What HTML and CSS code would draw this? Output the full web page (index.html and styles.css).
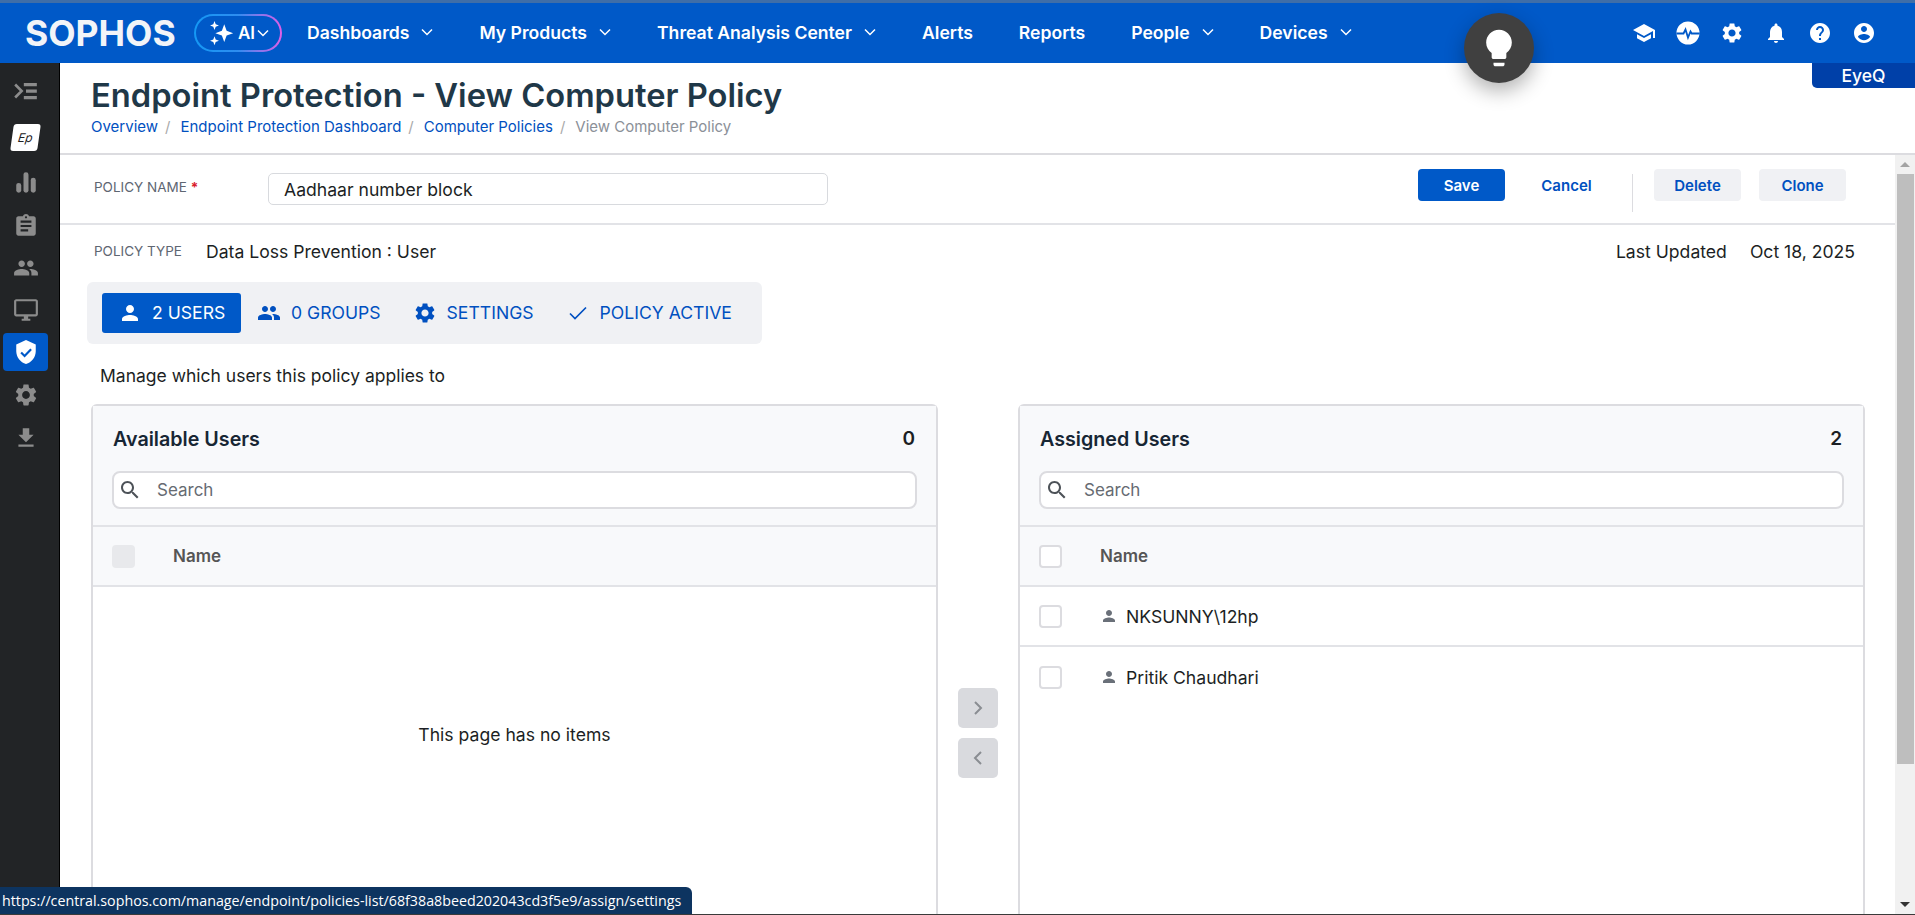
FILE: index.html
```html
<!DOCTYPE html>
<html>

<head>
    <meta charset="utf-8">
    <title>Endpoint Protection - View Computer Policy</title>
    <link rel="stylesheet" href="styles.css">
</head>

<body>
    <svg class="sprite" xmlns="http://www.w3.org/2000/svg">
        <defs>
            <symbol id="i-chevron" viewBox="0 0 12 8"><path d="M1 1.5l5 5 5-5" fill="none" stroke="currentColor" stroke-width="1.5"/></symbol>
            <symbol id="i-person" viewBox="0 0 24 24"><path d="M12 12c2.21 0 4-1.79 4-4s-1.79-4-4-4-4 1.79-4 4 1.79 4 4 4zm0 2c-2.67 0-8 1.34-8 4v2h16v-2c0-2.66-5.33-4-8-4z"/></symbol>
            <symbol id="i-group" viewBox="0 0 24 24"><path d="M16 11c1.66 0 2.99-1.34 2.99-3S17.66 5 16 5c-1.66 0-3 1.34-3 3s1.34 3 3 3zm-8 0c1.66 0 2.99-1.34 2.99-3S9.66 5 8 5C6.34 5 5 6.34 5 8s1.34 3 3 3zm0 2c-2.33 0-7 1.17-7 3.5V19h14v-2.5c0-2.33-4.67-3.5-7-3.5zm8 0c-.29 0-.62.02-.97.05 1.16.84 1.97 1.97 1.97 3.45V19h6v-2.5c0-2.33-4.67-3.5-7-3.5z"/></symbol>
            <symbol id="i-gear" viewBox="0 0 24 24"><path d="M19.14 12.94c.04-.3.06-.61.06-.94 0-.32-.02-.64-.07-.94l2.03-1.58c.18-.14.23-.41.12-.61l-1.92-3.32c-.12-.22-.37-.29-.59-.22l-2.39.96c-.5-.38-1.03-.7-1.62-.94l-.36-2.54c-.04-.24-.24-.41-.48-.41h-3.84c-.24 0-.43.17-.47.41l-.36 2.54c-.59.24-1.13.57-1.62.94l-2.39-.96c-.22-.08-.47 0-.59.22L2.74 8.87c-.12.21-.08.47.12.61l2.03 1.58c-.05.3-.09.63-.09.94s.02.64.07.94l-2.03 1.58c-.18.14-.23.41-.12.61l1.92 3.32c.12.22.37.29.59.22l2.39-.96c.5.38 1.03.7 1.62.94l.36 2.54c.05.24.24.41.48.41h3.84c.24 0 .44-.17.47-.41l.36-2.54c.59-.24 1.13-.56 1.62-.94l2.39.96c.22.08.47 0 .59-.22l1.92-3.32c.12-.22.07-.47-.12-.61l-2.01-1.58zM12 15.6c-1.98 0-3.6-1.62-3.6-3.6s1.62-3.6 3.6-3.6 3.6 1.62 3.6 3.6-1.62 3.6-3.6 3.6z"/></symbol>
            <symbol id="i-search" viewBox="0 0 24 24"><path d="M15.5 14h-.79l-.28-.27C15.41 12.59 16 11.11 16 9.5 16 5.91 13.09 3 9.5 3S3 5.91 3 9.5 5.91 16 9.5 16c1.61 0 3.09-.59 4.23-1.57l.27.28v.79l5 4.99L20.49 19l-4.99-5zm-6 0C7.01 14 5 11.99 5 9.5S7.01 5 9.5 5 14 7.01 14 9.5 11.99 14 9.5 14z"/></symbol>
        </defs>
    </svg>

    <div class="app">
        <!-- top bar -->
        <header class="topbar">
            <span class="logo">SOPHOS</span>
            <div class="ai-pill">
                <svg class="ai-stars" viewBox="0 0 24 24" fill="#fff"><path d="M15 4l2.200 6 6 2.200-6 2.200-2.200 6-2.200-6-6-2.200 6-2.200zM6 1l1.100 3 3 1.100-3 1.100L6 9.200 4.900 6.200l-3-1.100 3-1.100zM6 15l1.100 3 3 1.100-3 1.100L6 23.200l-1.100-3-3-1.100 3-1.100z"/></svg>
                <span>AI</span>
                <svg class="chev"><use href="#i-chevron"/></svg>
            </div>
            <nav class="mainnav">
                <a>Dashboards <svg class="chev"><use href="#i-chevron"/></svg></a>
                <a>My Products <svg class="chev"><use href="#i-chevron"/></svg></a>
                <a>Threat Analysis Center <svg class="chev"><use href="#i-chevron"/></svg></a>
                <a>Alerts</a>
                <a>Reports</a>
                <a>People <svg class="chev"><use href="#i-chevron"/></svg></a>
                <a>Devices <svg class="chev"><use href="#i-chevron"/></svg></a>
            </nav>
            <div class="topicons">
                <svg viewBox="0 0 24 24"><path d="M5 13.18v4L12 21l7-3.820v-4L12 17l-7-3.820zM12 3L1 9l11 6 9-4.910V17h2V9L12 3z"/></svg>
                <svg viewBox="0 0 24 24"><path fill-rule="evenodd" d="M12 .5a11.500 11.500 0 1 0 0 23 11.500 11.500 0 0 0 0-23z"/><path d="M.5 12.500h7l2-4 2.500 8 2.500-6 1.200 2h8" fill="none" stroke="#0059c8" stroke-width="1.800"/></svg>
                <svg viewBox="0 0 24 24"><use href="#i-gear"/></svg>
                <svg viewBox="0 0 24 24"><path d="M12 22c1.100 0 2-.9 2-2h-4c0 1.100.89 2 2 2zm6-6v-5c0-3.070-1.640-5.640-4.500-6.320V4c0-.83-.67-1.500-1.500-1.500s-1.500.67-1.500 1.500v.68C7.630 5.360 6 7.920 6 11v5l-2 2v1h16v-1l-2-2z"/></svg>
                <svg viewBox="0 0 24 24"><path d="M12 2C6.480 2 2 6.480 2 12s4.480 10 10 10 10-4.480 10-10S17.520 2 12 2zm1 17h-2v-2h2v2zm2.070-7.750l-.9.92C13.450 12.900 13 13.500 13 15h-2v-.5c0-1.100.45-2.100 1.170-2.830l1.240-1.260c.37-.36.59-.86.59-1.410 0-1.100-.9-2-2-2s-2 .9-2 2H8c0-2.210 1.790-4 4-4s4 1.790 4 4c0 .88-.36 1.680-.93 2.250z"/></svg>
                <svg viewBox="0 0 24 24"><path d="M12 2C6.480 2 2 6.480 2 12s4.480 10 10 10 10-4.480 10-10S17.520 2 12 2zm0 3c1.660 0 3 1.340 3 3s-1.340 3-3 3-3-1.340-3-3 1.340-3 3-3zm0 14.200c-2.500 0-4.710-1.280-6-3.220.03-1.990 4-3.080 6-3.080 1.990 0 5.970 1.090 6 3.080-1.290 1.940-3.500 3.220-6 3.220z"/></svg>
            </div>
        </header>

        <div class="body-row">
            <!-- left rail -->
            <aside class="rail">
                <svg class="rail-icon" viewBox="0 0 24 24"><path d="M10 4.500h12v3H10zM12 10.500h10v3H12zM10 16.500h12v3H10z"/><path d="M2 6l6 6-6 6" fill="none" stroke="currentColor" stroke-width="2.400"/></svg>
                <div class="product-badge"><span>Ep</span></div>
                <svg class="rail-icon chart" viewBox="0 0 24 24"><rect x="3" y="13" width="4.600" height="9" rx="2.300"/><rect x="9.700" y="3" width="4.600" height="19" rx="2.300"/><rect x="16.400" y="8" width="4.600" height="14" rx="2.300"/></svg>
                <svg class="rail-icon" viewBox="0 0 24 24"><path d="M19 3h-4.180C14.400 1.840 13.300 1 12 1c-1.300 0-2.400.84-2.820 2H5c-1.100 0-2 .9-2 2v14c0 1.100.9 2 2 2h14c1.100 0 2-.9 2-2V5c0-1.100-.9-2-2-2zm-7 0c.55 0 1 .45 1 1s-.45 1-1 1-1-.45-1-1 .45-1 1-1zm2 14H7v-2h7v2zm3-4H7v-2h10v2zm0-4H7V7h10v2z"/></svg>
                <svg class="rail-icon" viewBox="0 0 24 24"><use href="#i-group"/></svg>
                <svg class="rail-icon" viewBox="0 0 24 24"><path d="M21 2H3c-1.100 0-2 .9-2 2v12c0 1.100.9 2 2 2h7v2H8v2h8v-2h-2v-2h7c1.100 0 2-.9 2-2V4c0-1.100-.9-2-2-2zm0 14H3V4h18v12z"/></svg>
                <div class="rail-active">
                    <svg viewBox="0 0 24 24"><path fill="#fff" d="M12 1L3 5v6c0 5.550 3.840 10.740 9 12 5.160-1.260 9-6.450 9-12V5l-9-4z"/><path d="M7.500 12.500l3.200 3.200 6-6.200" fill="none" stroke="#0059c8" stroke-width="2"/></svg>
                </div>
                <svg class="rail-icon" viewBox="0 0 24 24"><use href="#i-gear"/></svg>
                <svg class="rail-icon" viewBox="0 0 24 24"><path d="M19 9h-4V3H9v6H5l7 7 7-7zM5 18v2h14v-2H5z"/></svg>
            </aside>

            <main class="main">
                <div class="page-head">
                    <h1>Endpoint Protection - View Computer Policy</h1>
                    <div class="crumbs">
                        <a>Overview</a><i>/</i>
                        <a>Endpoint Protection Dashboard</a><i>/</i>
                        <a>Computer Policies</a><i>/</i>
                        <span>View Computer Policy</span>
                    </div>
                </div>

                <div class="scroll-row">
                    <div class="content">
                        <!-- policy name -->
                        <div class="name-row">
                            <label class="field-label name-label">POLICY NAME <b>*</b></label>
                            <div class="name-input">Aadhaar number block</div>
                            <div class="actions">
                                <button class="btn primary">Save</button>
                                <button class="btn link">Cancel</button>
                                <span class="divider"></span>
                                <button class="btn soft">Delete</button>
                                <button class="btn soft">Clone</button>
                            </div>
                        </div>

                        <div class="type-row">
                            <label class="field-label type-label">POLICY TYPE</label>
                            <span>Data Loss Prevention : User</span>
                            <span class="updated">Last Updated</span>
                            <span class="updated-date">Oct 18, 2025</span>
                        </div>

                        <!-- tabs -->
                        <div class="tabs">
                            <a class="tab active"><svg viewBox="0 0 24 24"><use href="#i-person"/></svg>2 USERS</a>
                            <a class="tab"><svg viewBox="0 0 24 24"><use href="#i-group"/></svg>0 GROUPS</a>
                            <a class="tab"><svg viewBox="0 0 24 24"><use href="#i-gear"/></svg>SETTINGS</a>
                            <a class="tab"><svg viewBox="0 0 24 24"><path d="M4 12.500l5 5L20 6.500" fill="none" stroke="currentColor" stroke-width="1.700"/></svg>POLICY ACTIVE</a>
                        </div>

                        <p class="hint">Manage which users this policy applies to</p>

                        <div class="panels">
                            <section class="panel">
                                <div class="panel-head">
                                    <div class="panel-title"><h2>Available Users</h2><span>0</span></div>
                                    <div class="search"><svg viewBox="0 0 24 24"><use href="#i-search"/></svg>Search</div>
                                </div>
                                <div class="row head-row"><span class="check filled"></span><span class="col-name">Name</span></div>
                                <div class="empty">This page has no items</div>
                            </section>

                            <div class="transfer">
                                <button><svg viewBox="0 0 24 24"><path d="M9 6l6 6-6 6" fill="none" stroke="currentColor" stroke-width="2"/></svg></button>
                                <button><svg viewBox="0 0 24 24"><path d="M15 6l-6 6 6 6" fill="none" stroke="currentColor" stroke-width="2"/></svg></button>
                            </div>

                            <section class="panel">
                                <div class="panel-head">
                                    <div class="panel-title"><h2>Assigned Users</h2><span>2</span></div>
                                    <div class="search"><svg viewBox="0 0 24 24"><use href="#i-search"/></svg>Search</div>
                                </div>
                                <div class="row head-row"><span class="check"></span><span class="col-name">Name</span></div>
                                <div class="row"><span class="check"></span><svg class="user-icon" viewBox="0 0 24 24"><use href="#i-person"/></svg><span>NKSUNNY\12hp</span></div>
                                <div class="row last"><span class="check"></span><svg class="user-icon" viewBox="0 0 24 24"><use href="#i-person"/></svg><span>Pritik Chaudhari</span></div>
                            </section>
                        </div>
                    </div>

                    <div class="scrollbar">
                        <span class="arrow up"></span>
                        <span class="thumb"></span>
                        <span class="arrow down"></span>
                    </div>
                </div>
            </main>
        </div>

        <!-- overlays -->
        <div class="bulb">
            <svg viewBox="0 0 24 24"><path d="M9 21c0 .55.45 1 1 1h4c.55 0 1-.45 1-1v-1H9v1zm3-19C8.140 2 5 5.140 5 9c0 2.380 1.190 4.470 3 5.740V17c0 .55.45 1 1 1h6c.55 0 1-.45 1-1v-2.260c1.810-1.270 3-3.360 3-5.740 0-3.860-3.140-7-7-7z"/></svg>
        </div>
        <div class="eyeq">EyeQ</div>
        <div class="status-url">https://central.sophos.com/manage/endpoint/policies-list/68f38a8beed202043cd3f5e9/assign/settings</div>
    </div>
</body>

</html>
```

FILE: styles.css
```css
* {
    box-sizing: border-box;
}

body {
    margin: 0;
    background-color: #fff;
    color: #1c1f24;
    font-family: Inter, "Liberation Sans", sans-serif;
    font-size: 17.6px;
}

.sprite {
    display: none;
}

.app {
    position: relative;
    display: flex;
    flex-direction: column;
    height: 915px;
    overflow: hidden;
    border-bottom: 1px solid #3a3a3a;
}

/*top bar*/

.topbar {
    display: flex;
    align-items: center;
    flex: none;
    height: 63px;
    padding-left: 25px;
    background-color: #0059c8;
    border-top: 3px solid #3f6ea8;
    color: #fff;
}

.logo {
    width: 151px;
    font-size: 35.5px;
    font-weight: 700;
    color: #f2f4f8;
}

.ai-pill {
    display: flex;
    align-items: center;
    width: 88px;
    height: 38px;
    margin-left: 18px;
    padding-left: 12px;
    border: 2px solid transparent;
    border-radius: 19px;
    background: linear-gradient(#0059c8, #0059c8) padding-box, linear-gradient(90deg, #1499f5, #2e8df0 50%, #e25fe6) border-box;
    font-size: 17px;
    font-weight: 600;
}

.ai-stars {
    width: 26px;
    height: 26px;
    margin-right: 4px;
    fill: #fff;
}

.chev {
    width: 12px;
    height: 8px;
    margin-left: 2px;
    color: #fff;
}

.mainnav {
    display: flex;
    align-items: center;
    gap: 46px;
    margin-left: 25px;
    padding-bottom: 2px;
}

.mainnav a {
    display: flex;
    align-items: center;
    font-size: 17.6px;
    font-weight: 600;
    white-space: nowrap;
}

.mainnav .chev {
    margin-left: 12px;
}

.topicons {
    display: flex;
    gap: 20px;
    margin-left: auto;
    margin-right: 39px;
}

.topicons svg {
    width: 24px;
    height: 24px;
    fill: #fff;
}

.body-row {
    display: flex;
    flex: 1;
    min-height: 0;
}

/*left rail*/

.rail {
    display: flex;
    flex-direction: column;
    align-items: center;
    flex: none;
    width: 60px;
    padding-right: 8px;
    background-color: #222426;
    border-right: 1px solid #000;
    color: #8c8c8c;
}

.rail-icon {
    flex: none;
    width: 26px;
    height: 26px;
    margin-top: 16px;
    fill: currentColor;
}

.rail-icon:first-child {
    margin-top: 15px;
}

.rail-icon:last-child {
    margin-top: 17px;
}

.rail-icon.chart {
    margin-top: 14px;
    margin-bottom: 2px;
}

.product-badge {
    display: flex;
    align-items: center;
    justify-content: center;
    flex: none;
    width: 27px;
    height: 27px;
    margin-top: 20px;
    margin-bottom: 4px;
    background-color: #fff;
    border-radius: 3px;
    color: #222;
    font-size: 12px;
    font-style: italic;
    transform: skewX(-8deg);
}

.rail-active {
    display: flex;
    align-items: center;
    justify-content: center;
    flex: none;
    width: 45px;
    height: 38px;
    margin-top: 10px;
    margin-bottom: -5px;
    background-color: #0059c8;
    border-radius: 4px;
}

.rail-active svg {
    width: 26px;
    height: 26px;
}

/*page header*/

.main {
    display: flex;
    flex-direction: column;
    flex: 1;
    min-width: 0;
}

.page-head {
    flex: none;
    height: 92px;
    padding: 15px 0 0 31px;
    border-bottom: 2px solid #dcdce0;
}

h1 {
    margin: 0;
    color: #1f3848;
    font-size: 32.7px;
    font-weight: 600;
    line-height: 34px;
}

.crumbs {
    display: flex;
    margin-top: 5px;
    color: #0050c0;
    font-size: 15px;
    line-height: 20px;
}

.crumbs i {
    margin: 0 10px 0 7px;
    color: #aaa;
    font-style: normal;
}

.crumbs span {
    color: #8b9098;
}

.scroll-row {
    display: flex;
    flex: 1;
    min-height: 0;
}

.content {
    display: flex;
    flex-direction: column;
    flex: 1;
    min-width: 0;
}

/*policy name row*/

.field-label {
    color: #5e6672;
    font-size: 13.5px;
}

.field-label b {
    color: #d9202c;
}

.name-row {
    display: flex;
    align-items: center;
    flex: none;
    height: 70px;
    padding-left: 34px;
    padding-bottom: 8px;
    border-bottom: 2px solid #e2e3e7;
}

.name-label {
    width: 174px;
    margin-top: 4px;
}

.name-input {
    width: 560px;
    height: 32px;
    margin-top: 8px;
    padding-left: 15px;
    border: 1px solid #d8dade;
    border-radius: 5px;
    line-height: 32px;
}

.actions {
    display: flex;
    align-items: center;
    margin-left: auto;
    margin-right: 49px;
}

.btn {
    width: 87px;
    height: 32px;
    padding: 0;
    border: 0;
    border-radius: 4px;
    background: none;
    color: #0050c0;
    font-family: inherit;
    font-size: 15px;
    font-weight: 600;
}

.btn.primary {
    background-color: #0059c8;
    color: #fff;
}

.btn.link {
    width: 127px;
    padding-right: 4px;
}

.btn.soft {
    background-color: #f0f1f4;
}

.btn.soft + .btn.soft {
    margin-left: 18px;
}

.divider {
    width: 1px;
    height: 38px;
    margin-top: 16px;
    margin-right: 21px;
    background-color: #dcdce0;
}

.type-row {
    display: flex;
    align-items: center;
    flex: none;
    height: 57px;
    padding: 0 40px 5px 34px;
}

.type-label {
    width: 112px;
}

.updated {
    margin-left: auto;
}

.updated-date {
    margin-left: 23px;
}

/*tabs*/

.tabs {
    display: flex;
    align-items: center;
    flex: none;
    width: 675px;
    height: 62px;
    margin-left: 27px;
    padding-left: 15px;
    background-color: #f0f1f4;
    border-radius: 6px;
    font-size: 17.6px;
    line-height: 24px;
}

.tab {
    display: flex;
    align-items: center;
    flex: none;
    height: 40px;
    padding-bottom: 1px;
    margin-right: 32px;
    color: #0050c0;
    white-space: nowrap;
}

.tab svg {
    width: 24px;
    height: 24px;
    margin-right: 10px;
    fill: currentColor;
}

.tab.active {
    width: 139px;
    margin-right: 16px;
    padding-left: 16px;
    background-color: #0059c8;
    border-radius: 3px;
    color: #fff;
}

.hint {
    flex: none;
    margin: 22px 0 18px 40px;
    font-size: 17.5px;
    line-height: 20px;
}

/*user panels*/

.panels {
    display: flex;
    flex: 1;
    min-height: 0;
    padding-left: 31px;
}

.panel {
    flex: none;
    width: 847px;
    border: 2px solid #dcdce0;
    border-bottom: 0;
    border-radius: 6px 6px 0 0;
}

.panel-head {
    height: 121px;
    padding: 0 19px;
    background-color: #f8f9fb;
    border-bottom: 2px solid #e2e3e7;
}

.panel-title {
    display: flex;
    justify-content: space-between;
    align-items: center;
    height: 65px;
    padding: 0 2px 0 1px;
}

h2 {
    margin: 0;
    color: #172634;
    font-size: 19.7px;
    font-weight: 600;
}

.panel-title span {
    font-size: 19px;
    font-weight: 600;
}

.search {
    display: flex;
    align-items: center;
    height: 38px;
    padding-left: 4px;
    background-color: #fff;
    border: 2px solid #dcdce0;
    border-radius: 8px;
    color: #666b72;
    font-size: 17px;
}

.search svg {
    width: 24px;
    height: 24px;
    margin-right: 15px;
    fill: #4d5258;
}

.row {
    display: flex;
    align-items: center;
    height: 60px;
    padding-left: 19px;
    border-bottom: 2px solid #e2e3e7;
}

.row.last {
    border-bottom: 0;
}

.head-row {
    background-color: #f8f9fb;
    color: #555;
}

.check {
    flex: none;
    width: 23px;
    height: 23px;
    margin-right: 38px;
    background-color: #fff;
    border: 2px solid #dcdce0;
    border-radius: 4px;
}

.check.filled {
    background-color: #e8e9ec;
    border-color: #e8e9ec;
}

.col-name {
    font-size: 17px;
    font-weight: 600;
}

.user-icon {
    width: 18px;
    height: 18px;
    margin-right: 8px;
    fill: #6a7079;
}

.empty {
    padding-top: 137px;
    text-align: center;
}

.transfer {
    display: flex;
    flex-direction: column;
    align-items: center;
    gap: 10px;
    flex: none;
    width: 80px;
    padding-top: 284px;
}

.transfer button {
    width: 40px;
    height: 40px;
    padding: 8px;
    border: 0;
    border-radius: 5px;
    background-color: #d9dade;
    color: #8a8d92;
}

/*scrollbar*/

.scrollbar {
    display: flex;
    flex-direction: column;
    align-items: center;
    flex: none;
    width: 20px;
    background-color: #f1f1f1;
}

.arrow {
    width: 0;
    height: 0;
    border-left: 5px solid transparent;
    border-right: 5px solid transparent;
}

.arrow.up {
    margin-top: 7px;
    border-bottom: 5px solid #a3a3a3;
}

.thumb {
    width: 17px;
    height: 590px;
    margin: 7px 0 0 1px;
    background-color: #bebebe;
}

.arrow.down {
    margin-top: auto;
    margin-bottom: 7px;
    border-top: 5px solid #333;
}

/*overlays*/

.bulb {
    position: absolute;
    top: 13px;
    left: 1464px;
    display: flex;
    align-items: center;
    justify-content: center;
    width: 70px;
    height: 70px;
    background-color: #404040;
    border-radius: 50%;
    box-shadow: 0 8px 20px rgba(0, 0, 0, .3);
}

.bulb svg {
    width: 44px;
    height: 44px;
    fill: #fff;
}

.eyeq {
    position: absolute;
    top: 63px;
    right: 0;
    width: 103px;
    height: 25px;
    background-color: #0040a8;
    border-bottom-left-radius: 5px;
    color: #fff;
    font-size: 17.5px;
    font-weight: 500;
    line-height: 26px;
    text-align: center;
}

.status-url {
    position: absolute;
    left: 0;
    bottom: 0;
    height: 27px;
    padding: 0 11px 0 2px;
    background-color: #0d3460;
    border-top-right-radius: 6px;
    color: #fff;
    font-family: "Open Sans", sans-serif;
    font-size: 14.25px;
    line-height: 27px;
    white-space: nowrap;
}
```
